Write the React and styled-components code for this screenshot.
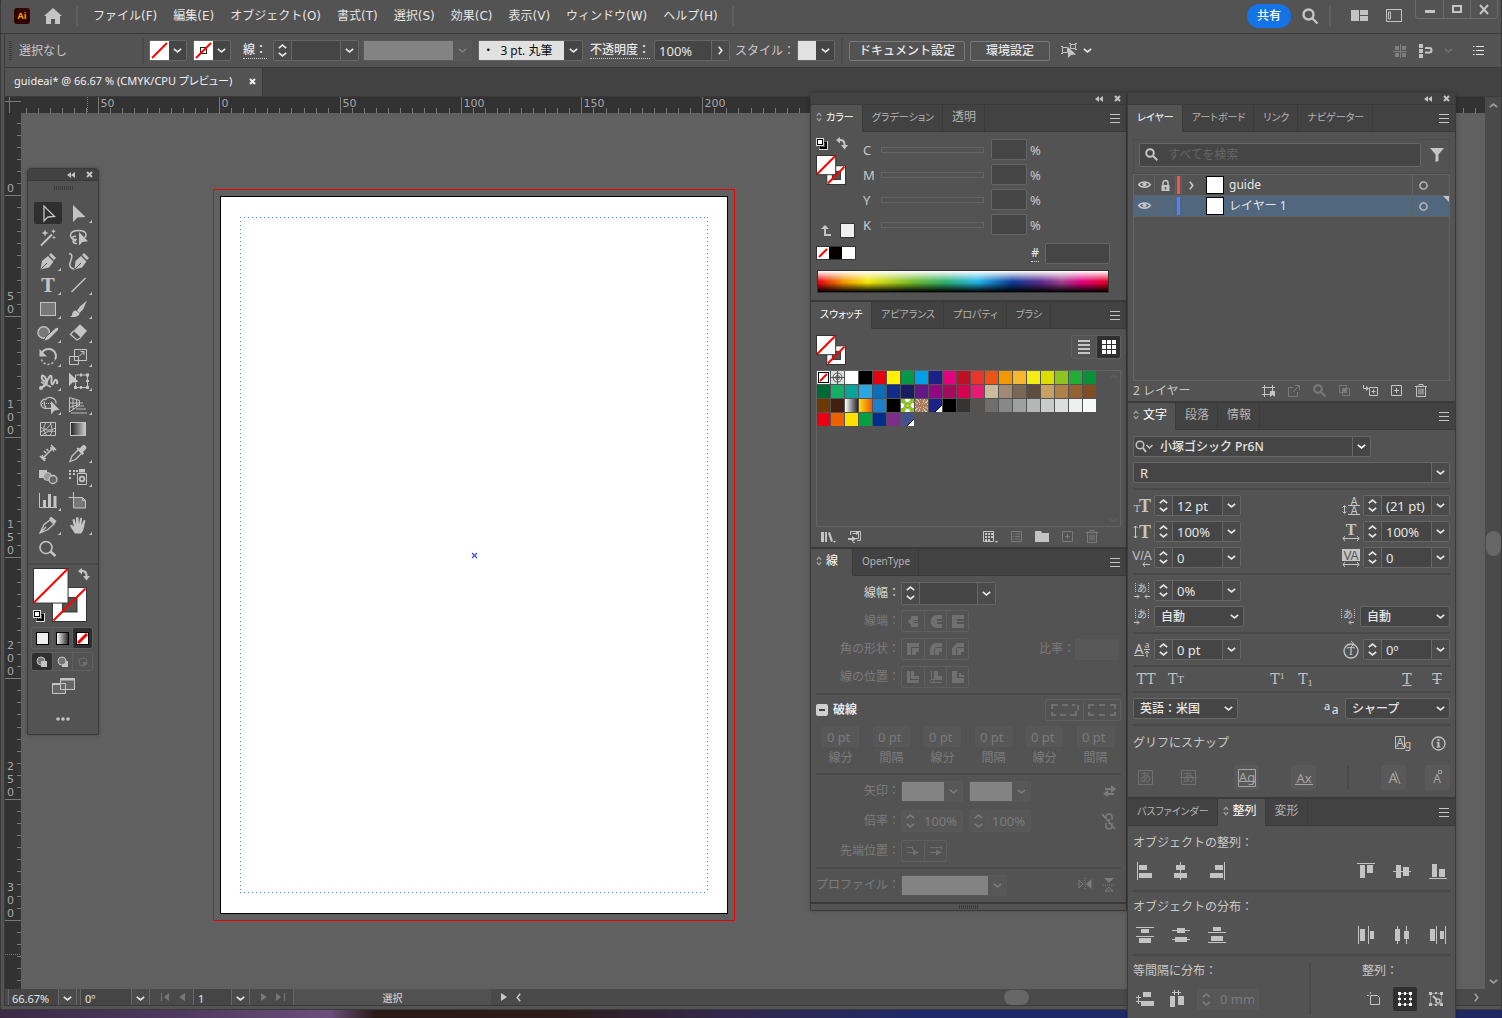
import React from "react";
import styled, { createGlobalStyle, css } from "styled-components";

const color = {
  panel: "#535353",
  dark: "#424242",
  line: "#3a3a3a",
  rule: "#494949",
  edge: "#666666",
  field: "#454545",
  text: "#e6e6e6",
  label: "#c8c8c8",
  icon: "#c4c4c4",
  dim: "#7b7b7b",
};

const GlobalStyle = createGlobalStyle`
  * { box-sizing: border-box; }
  body {
    margin: 0;
    background: #3a2a45;
    color: ${color.text};
    font: 12px/16px "Noto Sans", "Noto Sans CJK JP", sans-serif;
  }
  button, input, select {
    margin: 0;
    padding: 0;
    border: 0;
    background: none;
    color: inherit;
    font: inherit;
    border-radius: 0;
    appearance: none;
  }
  button { display: flex; align-items: center; justify-content: center; }
  svg { display: block; flex: none; }
  ul { list-style: none; margin: 0; padding: 0; }
`;

/* ---------- icons ---------- */

const Svg = styled.svg`
  overflow: visible;
  fill: none;
  stroke: currentColor;
  stroke-width: ${(p) => p.$sw || 1};
  .f { fill: currentColor; stroke: none; }
  .g { fill: #777777; }
  .d { stroke-dasharray: 1 1; }
  text { fill: currentColor; stroke: none; }
  text.k { fill: ${color.panel}; }
`;

function Icon({ w = 16, h = 16, sw, children }) {
  return (
    <Svg width={w} height={h} viewBox={`0 0 ${w} ${h}`} $sw={sw} aria-hidden="true">
      {children}
    </Svg>
  );
}

const serif = '"DejaVu Serif", serif';
const boldSerif = '"Liberation Serif", serif';
const sans = '"Noto Sans", sans-serif';
const arial = '"Liberation Sans", sans-serif';
const jp = '"Noto Sans CJK JP", sans-serif';

const Chevron = () => <Icon w={9} h={5} sw={1.7}><path d="M.8.8l3.700 3 3.700-3" /></Icon>;
const ChevronUp = () => <Icon w={9} h={5} sw={1.7}><path d="M.8 4.200l3.700-3 3.700 3" /></Icon>;
const ChevronRight = () => <Icon w={5} h={9} sw={1.7}><path d="M.8.8l3 3.700-3 3.700" /></Icon>;
const ChevronLeft = () => <Icon w={5} h={9} sw={1.5}><path d="M4.200.8l-3 3.700 3 3.700" /></Icon>;
const Close = () => <Icon w={7} h={7} sw={2}><path d="M1 1l5 5M6 1L1 6" /></Icon>;
const Collapse = () => <Icon w={8} h={6}><path className="f" d="M4 0v6L0 3zM8 0v6L4 3z" /></Icon>;
const MenuLines = () => <Icon w={10} h={9}><path d="M0 .5h10M0 4.5h10M0 8.5h10" /></Icon>;
const Updown = () => <Icon w={6} h={10} sw={1.3}><path d="M.8 3.8L3 1.2l2.2 2.6M.8 6.2L3 8.8l2.2-2.6" /></Icon>;
const Grip = () => <Icon w={19} h={4}><path stroke="#3a3a3a" d="M.5 0v4M2.5 0v4M4.5 0v4M6.5 0v4M8.5 0v4M10.5 0v4M12.5 0v4M14.5 0v4M16.5 0v4M18.5 0v4" /></Icon>;
const Magnifier = () => <Icon w={13} h={13} sw={2}><circle cx="5" cy="5" r="3.8" /><path d="M8 8l4.3 4.3" /></Icon>;
const Swap = () => <Icon w={12} h={13}><path className="f" d="M4 0v2c4 0 5.500 2 5.500 6H12l-3.500 4.500L5 8h2.500c0-2.500-1-4-3.500-4v2.500L0 3z" /></Icon>;

const Defaults = () => (
  <Icon w={12} h={12}>
    <rect x="4.500" y="4.500" width="6" height="6" stroke="#ddd" strokeWidth="3" />
    <rect x="4.500" y="4.500" width="5.500" height="5.500" stroke="#000" strokeWidth="2" />
    <rect x=".5" y=".5" width="7" height="7" stroke="#ddd" />
    <rect x="1.500" y="1.500" width="5" height="5" fill="#fff" stroke="#000" />
  </Icon>
);

const Bin = () => <Icon w={12} h={13}><path d="M0 2.500h12M4 2.500v-2h4v2M1.500 3v9.500h9V3M4 4.500v6M6 4.500v6M8 4.500v6" /></Icon>;
const PlusBox = () => <Icon w={11} h={11}><path d="M.5.5h10v10H.5zM5.500 3v5M3 5.500h5" /></Icon>;

/* fill swatch over stroke swatch, both set to "none" */
function FillStroke({ size }) {
  const s = size * 0.64;
  const o = size - s;
  const t = s * 0.29;
  return (
    <Icon w={size} h={size}>
      <rect x={o} y={o} width={s - 0.5} height={s - 0.5} fill="#fff" stroke="#333" />
      <rect x={o + t} y={o + t} width={s - 2 * t} height={s - 2 * t} fill={color.panel} stroke="#333" />
      <path d={`M${o + 1} ${size - 1.5}L${size - 1.5} ${o + 1}`} stroke="#f00" strokeWidth="2" />
      <rect x=".5" y=".5" width={s} height={s} fill="#fff" stroke="#333" />
      <path d={`M1 ${s}L${s} 1`} stroke="#f00" strokeWidth="2" />
    </Icon>
  );
}

const NoneSwatch = ({ size = 19, square }) => (
  <Icon w={size} h={size}>
    <rect width={size} height={size} fill="#fff" stroke="none" />
    {square && <rect x={size / 2 - 3} y={size / 2 - 3} width="6" height="6" stroke="#222" />}
    <path d={`M2 ${size - 2}L${size - 2} 2`} stroke="#f00" strokeWidth="2" />
  </Icon>
);

const Target = () => <Icon w={13} h={13}><rect width="13" height="13" fill="#ddd" stroke="none" /><g stroke="#555"><circle cx="6.500" cy="6.500" r="4.500" /><circle cx="6.500" cy="6.500" r="2" /><path d="M6.500 0v13M0 6.500h13" /></g></Icon>;

const tools = [
  ["選択", 0, <path key="a" strokeWidth="1.300" d="M10 4v15l4-4 6.500-.5z" />],
  ["ダイレクト選択", 1, <path key="a" className="f" d="M8 3v17l4.500-4.500 8-.5z" />],
  ["自動選択", 0, <g key="a"><path strokeWidth="2" d="M7 19.500L18 8.500" /><path className="f" d="M11 3.500l1 2.500 2.500 1-2.500 1-1 2.500-1-2.500-2.500-1 2.500-1zM19.500 3l.7 1.600 1.600.7-1.600.7-.7 1.700-.7-1.700-1.600-.7 1.600-.7zM20 9.500l.6 1.400 1.400.6-1.400.6L20 13.500l-.6-1.400-1.400-.6 1.400-.6z" /></g>],
  ["なげなわ", 0, <g key="a"><path strokeWidth="1.500" d="M12 13.500c-4 .5-7-1.500-6.500-4.500.5-3 4-4.500 8-4.500s7.500 1.500 7.500 4.500c0 1.300-.6 2-1.500 2.800M11 10.500a2.300 2.300 0 1 0 0 4M8 15c0 2 1.500 2.500 4 2.500" /><path className="f" d="M14 6v13.500l3.500-3.500 5.500-.8z" /></g>],
  ["ペン", 1, <g key="a"><path className="f" d="M6.500 19.500L8 11l6-5 5.500 5.500-4.500 6zM15 5l2-2 5 5-2 2z" /><path stroke="#535353" d="M7 19l6-6" /></g>],
  ["曲線", 0, <g key="a"><path className="f" d="M9.500 19.500L10.500 11l5.500-5 5.500 5.500-4.500 6zM17 5l2-2 5 5-2 2z" /><path stroke="#535353" d="M10 19l6-6" /><path strokeWidth="1.500" d="M4 4c3-1 3.500 2 2 6s-2.500 8 3 9" /></g>],
  ["文字", 1, <text key="a" x="14" y="18" textAnchor="middle" fontSize="18" fontWeight="bold" fontFamily={serif}>T</text>],
  ["直線", 1, <path key="a" strokeWidth="1.500" d="M6.500 18l14-14" />],
  ["長方形", 1, <rect key="a" className="g" x="6.500" y="4.500" width="15" height="13" />],
  ["ブラシ", 1, <path key="a" className="f" d="M22 2.500l-4 9-3.500 3.500-2.500-2.500 3-4zM11 12.500l3.500 3c-.5 3-5 4-9.500 3.500 2-1 2-2 2.500-4s2-2.800 3.500-2.500z" />],
  ["Shaper", 1, <g key="a"><circle className="g" strokeWidth="1.400" cx="9.700" cy="10.500" r="5.800" /><path d="M9.500 19.500l2.500-5L22 5.500c1.500-1 3.500 1 2.500 2.500L15 17.500z" fill="currentColor" stroke="#535353" /></g>],
  ["消しゴム", 1, <g key="a"><path className="f" d="M15 2.300l7 6.500-6 7-7.500-7z" /><path strokeWidth="1.300" d="M8.500 9l-3 3.500 6.500 5.500 4-2.500" /></g>],
  ["回転", 1, <g key="a"><path strokeWidth="2" d="M8 6.500a7.500 7 0 0 1 13 7" /><path className="f" d="M5.500 3v7.500H13z" /><path strokeWidth="1.500" strokeDasharray="2 2" d="M7.500 13.500a7 7 0 0 0 13 1" /></g>],
  ["拡大・縮小", 1, <g key="a"><path d="M9.500 3.500h12v11h-12zM4.500 10.500h9v8h-9zM14 10.500l4.500-4.500M15.500 5.500h3.500v3.500" /></g>],
  ["線幅", 1, <g key="a"><path strokeWidth="2" d="M6 18c3-1 7-3 7-6S9 4 8 6s1 6 4 5 3-6 5-5-1 7 1 8 2-5 4-4 1 3 1 4" /><path strokeWidth="1.500" d="M7 12l10 5M9 16l5-6" /><circle className="f" cx="7" cy="18" r="2" /></g>],
  ["自由変形", 1, <g key="a"><path d="M10.500 5v12.500h12V5z" /><path className="f" d="M4 2.500V16l3.500-3.500 6-.8zM9 16h3v3H9zM21 16h3v3h-3zM21 3.500h3v3h-3zM15 16h2v3h-2zM21 10h3v2h-3zM15 3.500h2v3h-2z" /></g>],
  ["シェイプ形成", 1, <g key="a"><path strokeWidth="1.300" d="M12 5.200a4.600 4.600 0 1 0-1 9.200h6M11 6a6 5.500 0 0 1 11 3.500M12 13.500a6 6 0 0 1-1.500-6" /><path className="d" d="M8 9.500h9" /><path className="f" d="M17 7v13.500l3.500-4 5-.8z" /></g>],
  ["遠近グリッド", 1, <g key="a"><path d="M4.500 3.500v14.500l10-7V6.500zM4.500 9h10M4.500 13.500l9-3M8 4.500v11M11.500 5.500v7.500" /><path strokeWidth="1.500" opacity=".6" d="M13 12h6M11 15h10M6 19h16M14 9h4" /></g>],
  ["メッシュ", 0, <path key="a" d="M6.500 4.500h15v13h-15zM6.500 9c5 4 10 4 15 1M12 4.500c-3 4-3 9 1 13M16 4.500c2 3 3 9 0 13M6.500 14c5-2 9-5 11-9.500M8 17.500c4-4 8-5 13.500-4" />],
  ["グラデーション", 0, <rect key="a" x="5.500" y="4.500" width="15" height="13" fill="url(#toolGradient)" />],
  ["ものさし", 0, <g key="a"><path strokeWidth="1.500" d="M9 16l10-10M6 14l5 5M17 3l5 5M8.500 13v3.500H12M16 6h3.500v3.500" /><path strokeWidth="1.500" d="M10 9l2 2M12.500 7l2 2" /></g>],
  ["スポイト", 1, <g key="a"><path strokeWidth="1.300" d="M5 19.500l2-5.500 6.500-6.500 3.500 3.500-6.500 6.500z" /><path className="f" d="M11.500 6.500l1.500-1 1.500 1 3-3c2-1.500 5 1.500 3.500 3.500l-3 3 1 1.500-1.500 1.500z" /></g>],
  ["ブレンド", 0, <g key="a"><path className="f" d="M5 4h8v8H5z" /><circle cx="13.500" cy="10.500" r="4" fill="#999" /><circle cx="19" cy="13.500" r="4" fill="#666" strokeWidth="1.300" /></g>],
  ["シンボルスプレー", 1, <g key="a"><path d="M12.500 7.500h9v11h-9z" /><path className="f" d="M14 3h6v3.500h-6zM4 4h2v2H4zM8 4h2v2H8zM11 4h2v2h-2zM4 7h2v2H4zM8 7h2v2H8zM4 11h2v2H4z" /><circle cx="17" cy="13" r="2.300" strokeWidth="1.800" /></g>],
  ["棒グラフ", 1, <g key="a"><path d="M5.500 3v14.500H23" /><path className="f" d="M9 10h3v7H9zM14 4h3v13h-3zM19.500 6h3v11h-3z" /></g>],
  ["アートボード", 0, <g key="a"><path className="g" d="M8.500 7.500h9l3 3v7.500h-12z" /><path d="M8.500 2v8M3.500 7.500h8M17.500 7.500v3h3" /></g>],
  ["スライス", 1, <g key="a"><path strokeWidth="1.300" d="M6 19l4-8.500 6-4.500 4 4L14 15.500zM6 19l6-6" /><path className="f" d="M15 5l2-2.500 5.500 4.500-2 3z" /></g>],
  ["手のひら", 1, <path key="a" className="f" d="M10 19.500C8 16 6 14 5 11.500c1-1.500 2.500-.5 4 1.500L7.500 6c1-1.500 2-1 2.500.5l1 4V4c.8-1.500 2-1.200 2.500 0l.5 6 1-5.500c1-1.200 2-.8 2 .5L16.500 11l2-4.500c1-1 2.200-.3 1.700 1-1.200 5-1.200 9-4.200 12z" />],
  ["ズーム", 0, <g key="a"><circle cx="12" cy="9.500" r="6" strokeWidth="1.600" /><path strokeWidth="2.500" d="M16.500 13.500l5 4.500" /></g>],
];

/* ---------- shared controls ---------- */

const box = css`
  border: 1px solid ${(p) => (p.$dim ? "#595959" : color.edge)};
  border-radius: 2px;
  background: ${(p) => (p.$dim ? "#575757" : color.field)};
  color: ${(p) => (p.$dim ? color.dim : color.text)};
`;

const Field = styled.div`
  ${box}
  display: flex;
  width: ${(p) => (p.$w ? `${p.$w}px` : "auto")};
  height: ${(p) => p.$h || 21}px;
  input {
    flex: 1;
    min-width: 0;
    padding: 0 ${(p) => p.$pad || 4}px;
    font-size: 13px;
  }
  > button {
    width: 18px;
    border-left: 1px solid ${(p) => (p.$dim ? "#595959" : color.edge)};
    background: #4b4b4b;
  }
`;

const Steps = styled.div`
  display: flex;
  flex-direction: column;
  justify-content: space-evenly;
  width: 18px;
  border-right: 1px solid ${(p) => (p.$dim ? "#595959" : color.edge)};
  background: ${(p) => (p.$dim ? "none" : "#4b4b4b")};
`;

function Spinner({ label, value = "", w = 87, h, dim, drop = true }) {
  return (
    <Field $w={w} $h={h} $dim={dim}>
      <Steps $dim={dim}>
        <button aria-label={`${label} 増やす`}><ChevronUp /></button>
        <button aria-label={`${label} 減らす`}><Chevron /></button>
      </Steps>
      <input aria-label={label} defaultValue={value} disabled={dim} />
      {drop && <button aria-label={`${label} 一覧`}><Chevron /></button>}
    </Field>
  );
}

const SelectBox = styled.div`
  ${box}
  display: grid;
  align-items: center;
  width: ${(p) => p.$w}px;
  height: 21px;
  > * { grid-area: 1 / 1; }
  select { width: 100%; height: 100%; padding-left: 6px; font-weight: 500; }
  svg { justify-self: end; margin-right: 4px; pointer-events: none; }
`;

function Select({ label, value, w }) {
  return (
    <SelectBox $w={w}>
      <select aria-label={label} defaultValue={value}><option>{value}</option></select>
      <Chevron />
    </SelectBox>
  );
}

const TextBox = styled.input`
  ${box}
  width: ${(p) => p.$w}px;
  height: 21px;
  padding: 0 4px;
  font-size: 13px;
`;

const IconButton = styled.button`
  width: ${(p) => p.$w || 24}px;
  height: ${(p) => p.$h || 22}px;
  color: ${(p) => (p.$dim ? "#707070" : color.icon)};
  background: ${(p) => (p.$on ? "#2f2f2f" : p.$tile ? "#595959" : "none")};
  border-radius: 2px;
`;

const Row = styled.div`
  display: flex;
  align-items: center;
  gap: ${(p) => p.$gap || 0}px;
  justify-content: ${(p) => p.$justify || "flex-start"};
  height: ${(p) => (p.$h ? `${p.$h}px` : "auto")};
  margin-top: ${(p) => p.$mt || 0}px;
`;

const Rule = styled.hr`
  width: 100%;
  height: 2px;
  margin: ${(p) => p.$mt ?? 5}px 0 0;
  border: 0;
  background: ${color.rule};
`;

/* ---------- menu bar ---------- */

const MenuBar = styled.header`
  display: flex;
  align-items: center;
  height: 34px;
  padding: 0 0 2px 13px;
  border-bottom: 1px solid ${color.line};
  background: ${color.panel};
`;

const Logo = styled.div`
  width: 16px;
  height: 16px;
  border-radius: 3px;
  background: #330000;
  color: #ff9a00;
  font: bold 9px/16px "Noto Sans", sans-serif;
  text-align: center;
`;

const MenuNav = styled.nav`
  display: flex;
  gap: 16px;
  padding-left: 15px;
  font-family: "DejaVu Sans", "Noto Sans CJK JP", sans-serif;
  white-space: nowrap;
`;

const Divider = styled.div`
  width: 2px;
  height: ${(p) => p.$h || 20}px;
  background: ${(p) => p.$c || "#606060"};
`;

const Push = styled.div`
  flex: ${(p) => p.$grow || 1};
`;

const Share = styled.button`
  width: 44px;
  height: 24px;
  border-radius: 12px;
  background: #1473e6;
  color: #ffffff;
  font-weight: 500;
`;

const MenuTools = styled.div`
  display: flex;
  align-items: center;
  gap: 11px;
  padding-right: 13px;
  color: ${color.icon};
  > :last-child { margin-left: 9px; }
`;

const WindowButtons = styled.div`
  display: flex;
  align-self: flex-start;
  height: 19px;
  margin-right: 3px;
  border: 1px solid #6c6c6c;
  border-top: 0;
  border-radius: 0 0 4px 4px;
  button { width: 27px; color: ${color.icon}; }
  button + button { border-left: 1px solid #6c6c6c; }
`;

const menus = ["ファイル(F)", "編集(E)", "オブジェクト(O)", "書式(T)", "選択(S)", "効果(C)", "表示(V)", "ウィンドウ(W)", "ヘルプ(H)"];

function AppMenu() {
  return (
    <MenuBar>
      <Logo>Ai</Logo>
      <IconButton $w={46} aria-label="ホーム">
        <Icon w={18} h={16}><path className="f" d="M9 0l9 8h-2v8h-5v-5H7v5H2V8H0z" /></Icon>
      </IconButton>
      <Divider />
      <MenuNav>{menus.map((m) => <button key={m}>{m}</button>)}</MenuNav>
      <Row $gap={14}><span /><Divider /></Row>
      <Push />
      <MenuTools>
        <Share>共有</Share>
        <Icon w={16} h={16} sw={2.4}><circle cx="6.500" cy="6.500" r="5" /><path d="M10 10l5.500 5.500" /></Icon>
        <Divider />
        <Row $gap={18}>
          <Icon w={17} h={11}><path className="f" d="M0 0h8v11H0zM9 0h8v5H9zM9 6h8v5H9z" /></Icon>
          <Icon w={16} h={13}><path d="M.5.5h15v12H.5zM2.500 3h2v7h-2z" /></Icon>
        </Row>
      </MenuTools>
      <WindowButtons>
        <button aria-label="最小化"><Icon w={10} h={10}><path className="f" d="M0 6h10v3H0z" /></Icon></button>
        <button aria-label="最大化"><Icon w={10} h={8} sw={2}><path d="M1 1h8v6H1z" /></Icon></button>
        <button aria-label="閉じる"><Icon w={10} h={9} sw={2}><path d="M1 0l8 9M9 0L1 9" /></Icon></button>
      </WindowButtons>
    </MenuBar>
  );
}

/* ---------- control bar ---------- */

const ControlBar = styled.div`
  display: flex;
  align-items: center;
  height: 34px;
  padding: 0 17px 0 4px;
  border-bottom: 1px solid ${color.line};
  background: ${color.panel};
  white-space: nowrap;
`;

const SideGrip = styled.div`
  width: 3px;
  height: 20px;
  background: repeating-linear-gradient(#3a3a3a 0 1px, transparent 1px 2px);
`;

const Status = styled.span`
  width: 130px;
  padding-left: 7px;
  color: ${color.label};
`;

const Swatch = styled.div`
  ${box}
  display: flex;
  width: ${(p) => p.$w || 38}px;
  height: 21px;
  margin-right: 6px;
  > button { width: 18px; }
`;

const Preview = styled.div`
  flex: 1;
  background: ${(p) => p.$bg || "#e1e1e1"};
  color: #111111;
  line-height: 19px;
`;

const Dotted = styled.span`
  margin: ${(p) => p.$m || "0 6px"};
  border-bottom: 1px dotted #d0d0d0;
  color: ${color.text};
  font-weight: 500;
`;

const PlainButton = styled.button`
  height: 20px;
  margin-right: 5px;
  padding: 0 ${(p) => p.$pad || 9}px;
  border: 1px solid #7a7a7a;
  border-radius: 2px;
  font-weight: 500;
`;

const StyleLabel = styled.span`
  padding: 0 2px 0 5px;
  color: ${color.label};
`;

function Controls() {
  return (
    <ControlBar>
      <SideGrip />
      <Status>選択なし</Status>
      <Row $gap={5}><Divider $c="#4a4a4a" $h={26} />
        <Swatch><NoneSwatch /><button aria-label="塗り"><Chevron /></button></Swatch>
      </Row>
      <Swatch><NoneSwatch square /><button aria-label="線"><Chevron /></button></Swatch>
      <Dotted>線：</Dotted>
      <Spinner label="線" w={86} />
      <Row $gap={4}><span /><Swatch $dim $w={109}><Preview $bg="#838383" /><button aria-label="プロファイル"><Chevron /></button></Swatch></Row>
      <Swatch $w={105}><Preview>&nbsp;・&nbsp; 3 pt. 丸筆</Preview><button aria-label="ブラシ"><Chevron /></button></Swatch>
      <Dotted $m="0 4px 0 1px">不透明度：</Dotted>
      <Field $w={76}><input aria-label="不透明度" defaultValue="100%" /><button aria-label="不透明度パネル"><ChevronRight /></button></Field>
      <StyleLabel>スタイル：</StyleLabel>
      <Swatch><Preview /><button aria-label="スタイル"><Chevron /></button></Swatch>
      <Row $gap={6}><Divider $c="#4a4a4a" $h={26} /><PlainButton>ドキュメント設定</PlainButton></Row>
      <PlainButton $pad={15}>環境設定</PlainButton>
      <IconButton $w={28} aria-label="類似オブジェクト">
        <Icon w={17} h={17}><path d="M1.500 5.500h5v5h-5zM9.500 2.500h5v4h-5zM0 4.500h2M0 11.500h2M8 1.500h2M14 1.500h2M14 7.500h2" /><path className="f" d="M7 5v11l3-3 5-.5z" /></Icon>
      </IconButton>
      <Chevron />
      <Push />
      <Row $gap={10}>
        <Icon w={14} h={14}><g opacity=".3"><path className="f" d="M2 2h4v4H2zM9 2h4v4H9zM2 9h4v4H2zM9 9h4v4H9z" /><path d="M7.500 0v14M0 7.500h14" /></g></Icon>
        <IconButton $w={16} aria-label="ピクセルに整合"><Icon w={16} h={14}><path className="f" d="M2 0h4v4H2zM2 5h4v4H2zM2 10h4v4H2z" /><path strokeWidth="2" d="M8 4h4.500q2 0 2 2.200T12.500 8.500H8" /></Icon></IconButton>
        <IconButton $w={10} $dim aria-label="整列先"><Chevron /></IconButton>
        <span />
        <Icon w={11} h={9}><path d="M3 .5h8M3 4.500h8M3 8.500h8M0 .5h1.500M0 4.500h1.500M0 8.500h1.500" /></Icon>
      </Row>
    </ControlBar>
  );
}

/* ---------- document area ---------- */

const DocTabs = styled.div`
  display: flex;
  height: 29px;
  border-bottom: 1px solid ${color.line};
  background: ${color.dark};
`;

const DocTab = styled.div`
  display: flex;
  align-items: center;
  justify-content: space-between;
  width: 258px;
  padding: 0 6px 2px 9px;
  border-right: 1px solid ${color.line};
  background: ${color.panel};
  color: #f0f0f0;
  font-size: 11px;
  font-feature-settings: "palt";
  white-space: nowrap;
`;

const Workspace = styled.main`
  flex: 1;
  display: grid;
  grid-template-columns: 16px 1fr 16px;
  grid-template-rows: 16px 1fr;
  min-height: 890px;
`;

const RulerSvg = styled.svg`
  width: 100%;
  height: 100%;
  background: #323232;
  fill: none;
  stroke: #7a7a7a;
  text {
    fill: #a8a8a8;
    stroke: none;
    font: 11px "DejaVu Sans", sans-serif;
  }
`;

const STEP = 12.08;
const ticks = (n) => Array.from({ length: n }, (_, i) => i);

function HorizontalRuler() {
  return (
    <RulerSvg aria-hidden="true">
      {ticks(122).map((i) => {
        const x = Math.round(198 + (i - 16) * STEP) + 0.5;
        const major = (i - 16) % 10 === 0;
        return (
          <g key={i}>
            <path d={`M${x} ${major ? 0 : 11}V16`} />
            {major && <text x={x + 2} y="10">{Math.abs((i - 16) * 5)}</text>}
          </g>
        );
      })}
      <path strokeDasharray="1 1" d="M66.500 0V16" />
    </RulerSvg>
  );
}

function VerticalRuler() {
  return (
    <RulerSvg aria-hidden="true">
      {ticks(73).map((i) => {
        const y = Math.round(82 + (i - 6) * STEP) + 0.5;
        const major = (i - 6) % 10 === 0;
        const digits = String((i - 6) * 5).split("");
        return (
          <g key={i}>
            <path d={`M${major ? 0 : 12} ${y}H16`} />
            {major && digits.map((d, k) => (
              <text key={k} x="2" y={y - 4 - (digits.length - 1 - k) * 13}>{d}</text>
            ))}
          </g>
        );
      })}
      <path strokeDasharray="1 1" d="M0 841.500H16" />
    </RulerSvg>
  );
}

const Canvas = styled.div`
  position: relative;
  overflow: hidden;
  background: #606060;
`;

const Bleed = styled.div`
  position: absolute;
  left: 192px;
  top: 76px;
  padding: 6px;
  border: 1px solid #f00000;
`;

const Artboard = styled.div`
  width: 508px;
  height: 718px;
  padding: 20px 19px;
  border: 1px solid #000000;
  background: #ffffff;
`;

const dots = "#4a80f0 0 1px, transparent 1px 4px";

const Guide = styled.div`
  display: grid;
  place-items: center;
  width: 100%;
  height: 100%;
  color: #3050d0;
  background:
    repeating-linear-gradient(90deg, ${dots}) top / 100% 1px no-repeat,
    repeating-linear-gradient(90deg, ${dots}) bottom / 100% 1px no-repeat,
    repeating-linear-gradient(${dots}) left / 1px 100% no-repeat,
    repeating-linear-gradient(${dots}) right / 1px 100% no-repeat;
`;

const VScroll = styled.div`
  grid-row: 1 / 3;
  grid-column: 3;
  display: flex;
  flex-direction: column;
  align-items: center;
  justify-content: space-between;
  padding: 6px 0 5px;
  background: #4a4a4a;
  color: #a0a0a0;
`;

const Thumb = styled.div`
  width: ${(p) => p.$w}px;
  height: ${(p) => p.$h}px;
  border-radius: 8px;
  background: #676767;
`;

const StatusBar = styled.footer`
  display: flex;
  align-items: center;
  height: 17px;
  padding: 0 22px 0 3px;
  border-bottom: 1px solid ${color.line};
  background: #4a4a4a;
  color: #a0a0a0;
`;

const StatusField = styled(Field)`
  height: 16px;
  border-top: 0;
  border-bottom: 0;
  border-radius: 0;
  margin-right: 3px;
  input { padding-top: 4px; font-size: 11px; line-height: 12px; }
  > button { padding-top: 3px; }
`;

const StatusName = styled.div`
  width: 198px;
  height: 16px;
  padding-top: 3px;
  border-left: 1px solid ${color.edge};
  background: #515151;
  color: ${color.label};
  text-align: center;
  font-size: 10px;
  line-height: 13px;
  font-weight: 500;
`;

const NavIcons = styled.div`
  display: flex;
  justify-content: space-evenly;
  width: 40px;
  color: ${(p) => (p.$lit ? "#c8c8c8" : "#777777")};
`;

const First = () => <Icon w={9} h={8}><path className="f" d="M0 0h1v8H0zM8 0v8L3 4z" /></Icon>;
const Prev = () => <Icon w={6} h={8}><path className="f" d="M6 0v8L0 4z" /></Icon>;
const Next = () => <Icon w={6} h={8}><path className="f" d="M0 0v8l6-4z" /></Icon>;
const Last = () => <Icon w={9} h={8}><path className="f" d="M8 0h1v8H8zM0 0v8l5-4z" /></Icon>;

function StatusLine() {
  return (
    <StatusBar>
      <StatusField $w={69} $pad={3}><input aria-label="ズーム" defaultValue="66.67%" /><button aria-label="ズーム一覧"><Chevron /></button></StatusField>
      <StatusField $w={70}><input aria-label="回転" defaultValue="0º" /><button aria-label="回転一覧"><Chevron /></button></StatusField>
      <NavIcons><First /><Prev /></NavIcons>
      <StatusField $w={57}><input aria-label="アートボード" defaultValue="1" /><button aria-label="アートボード一覧"><Chevron /></button></StatusField>
      <NavIcons><Next /><Last /></NavIcons>
      <StatusName>選択</StatusName>
      <NavIcons $lit><Next /><ChevronLeft /></NavIcons>
      <Push $grow={51} />
      <Thumb $w={25} $h={15} />
      <Push $grow={48} />
      <ChevronRight />
    </StatusBar>
  );
}

/* ---------- floating panels ---------- */

const FloatTitle = styled.div`
  display: flex;
  align-items: center;
  justify-content: flex-end;
  gap: 11px;
  height: 12px;
  padding-right: 5px;
  border-bottom: 1px solid ${color.line};
  background: ${color.dark};
  color: ${color.icon};
`;

const Float = styled.section`
  width: ${(p) => p.$w}px;
  border: 1px solid ${color.line};
  border-radius: 4px 4px 0 0;
  background: ${color.panel};
  box-shadow: 0 0 4px rgba(0, 0, 0, 0.25);
`;

const Docks = styled.div`
  position: absolute;
  top: 92px;
  right: 46px;
  display: flex;
  align-items: flex-start;
`;

const TabRow = styled.div`
  display: flex;
  height: ${(p) => (p.$first ? 27 : 29)}px;
  border-top: ${(p) => (p.$first ? 0 : `2px solid ${color.line}`)};
  background: ${color.dark};
`;

const Tab = styled.button`
  justify-content: flex-start;
  gap: 4px;
  min-width: 42px;
  padding: ${(p) => (p.$marked ? "0 8px 2px 5px" : "0 8px 2px 9px")};
  border-right: 1px solid ${color.line};
  border-bottom: 1px solid ${(p) => (p.$on ? color.panel : color.line)};
  background: ${(p) => (p.$on ? color.panel : color.dark)};
  color: ${(p) => (p.$on ? "#ffffff" : "#b4b4b4")};
  font-size: ${(p) => (p.$small ? 10 : 12)}px;
  font-feature-settings: "palt";
  white-space: nowrap;
  svg { color: #a0a0a0; }
`;

const TabEnd = styled.div`
  flex: 1;
  display: flex;
  align-items: center;
  justify-content: flex-end;
  padding-right: 6px;
  border-bottom: 1px solid ${color.line};
  color: ${color.icon};
`;

const isNarrow = (t) => /[ァ-ヶA-Z]/.test(t);

function Tabs({ items, active, marked, first }) {
  return (
    <TabRow $first={first}>
      {items.map((t) => (
        <Tab key={t} $on={t === active} $marked={t === active && marked} $small={isNarrow(t)}>
          {t === active && marked && <Updown />}
          {t}
        </Tab>
      ))}
      <TabEnd><MenuLines /></TabEnd>
    </TabRow>
  );
}

const Body = styled.div`
  padding: ${(p) => p.$p || "6px 5px"};
`;

/* ---------- tools ---------- */

const ToolsFloat = styled(Float)`
  position: absolute;
  left: 27px;
  top: 168px;
  width: 72px;
`;

const ToolGrid = styled.div`
  display: grid;
  grid-template-columns: 28px 28px;
  gap: 2px 3px;
  padding: 12px 0 3px 6px;
`;

const ToolsBody = styled.div`
  display: flex;
  flex-direction: column;
  padding: 5px 0 0;
  > svg { align-self: center; }
`;

const FillStrokeGrid = styled.div`
  display: grid;
  grid-template-columns: 54px;
  margin: 3px 5px 5px;
  > * { grid-area: 1 / 1; }
  > svg:nth-child(2) { justify-self: end; margin-right: -3px; color: ${color.icon}; }
  > svg:nth-child(3) { align-self: end; }
`;

const ButtonStrip = styled.div`
  display: flex;
  width: max-content;
  margin: ${(p) => p.$m || 0};
  border: 1px solid #5f5f5f;
  border-radius: 2px;
  button + button { border-left: 1px solid #5f5f5f; }
`;

function Tools() {
  return (
    <ToolsFloat>
      <FloatTitle><Collapse /><Close /></FloatTitle>
      <ToolsBody>
        <Grip />
        <ToolGrid>
          {tools.map(([name, more, art], i) => (
            <IconButton key={name} $w={28} $on={i === 0} aria-label={name}>
              <Icon w={28} h={22}>
                {i === 19 && (
                  <defs>
                    <linearGradient id="toolGradient">
                      <stop stopColor="#222" /><stop offset="1" stopColor="#ccc" />
                    </linearGradient>
                  </defs>
                )}
                {art}
                {!!more && <path className="f" d="M27 18v3h-3z" />}
              </Icon>
            </IconButton>
          ))}
        </ToolGrid>
        <Rule $mt={0} />
        <FillStrokeGrid><FillStroke size={54} /><Swap /><Defaults /></FillStrokeGrid>
        <ButtonStrip $m="0 3px 3px">
          <IconButton $w={20} $h={20} aria-label="カラー"><Icon w={13} h={13}><rect x=".5" y=".5" width="12" height="12" fill="#eee" stroke="#000" /></Icon></IconButton>
          <IconButton $w={20} $h={20} aria-label="グラデーション"><Icon w={13} h={13}><defs><linearGradient id="mini"><stop stopColor="#fff" /><stop offset="1" stopColor="#222" /></linearGradient></defs><rect x=".5" y=".5" width="12" height="12" fill="url(#mini)" stroke="#000" /></Icon></IconButton>
          <IconButton $w={20} $h={20} $on aria-label="なし"><Icon w={13} h={13}><rect x=".5" y=".5" width="12" height="12" fill="#fff" stroke="#000" /><path d="M2 11l9-9" stroke="#f00" strokeWidth="3" /></Icon></IconButton>
        </ButtonStrip>
        <ButtonStrip $m="0 3px 7px">
          <IconButton $w={20} $h={17} $on aria-label="標準描画"><Icon w={12} h={12}><circle className="g" cx="5" cy="5" r="4" /><path className="f" d="M5 5h6v6H5z" /></Icon></IconButton>
          <IconButton $w={20} $h={17} aria-label="背面描画"><Icon w={12} h={12}><path className="f" d="M5 5h6v6H5z" /><circle className="g" cx="5" cy="5" r="4" /></Icon></IconButton>
          <IconButton $w={20} $h={17} $dim aria-label="内側描画"><Icon w={12} h={12}><circle cx="6" cy="6" r="4" /><path className="f" d="M6 6h3v3H6z" /></Icon></IconButton>
        </ButtonStrip>
        <Icon w={23} h={17}><g stroke="#c4c4c4"><path fill="#666" d="M.5 5.500h13v10H.5zM8.500.5h14v11h-14z" /><path strokeWidth="2" d="M.5 6h8M8.500 1.500h14" /></g></Icon>
        <Row $h={30} $justify="center" $mt={9}><Icon w={14} h={4}><g fill="#c4c4c4" stroke="none"><circle cx="2" cy="2" r="1.800" /><circle cx="7" cy="2" r="1.800" /><circle cx="12" cy="2" r="1.800" /></g></Icon></Row>
      </ToolsBody>
    </ToolsFloat>
  );
}

/* ---------- colour ---------- */

const ColorGrid = styled.div`
  display: grid;
  grid-template-columns: 47px 1fr;
  padding: 5px 16px 6px 5px;
`;

const ColorLeft = styled.div`
  display: flex;
  flex-direction: column;
  color: ${color.icon};
`;

const Channel = styled.label`
  display: flex;
  align-items: center;
  gap: 7px;
  height: 21px;
  margin-bottom: 4px;
  color: ${color.label};
  font-size: 13px;
  > span:first-child { width: 11px; }
  > span:last-child { margin-left: -4px; }
`;

const ChannelList = styled.div`
  padding-top: 2px;
`;

const Slider = styled.input`
  width: 103px;
  height: 6px;
  border: 1px solid #646464;
  &::-webkit-slider-thumb { appearance: none; width: 1px; height: 1px; }
`;

const ChipRow = styled.div`
  display: flex;
  width: 40px;
  height: 14px;
  margin-top: 8px;
  border: 1px solid #333333;
`;

const Chip = styled.div`
  width: ${(p) => p.$s || 13}px;
  height: ${(p) => p.$s || 12}px;
  background: ${(p) => p.$bg};
  border: ${(p) => (p.$s ? "1px solid #333333" : 0)};
`;

const Spectrum = styled.div`
  height: 23px;
  margin: 0 17px 7px 6px;
  border: 1px solid #333333;
  background:
    linear-gradient(#ffffff 0, rgba(255, 255, 255, 0) 50%, rgba(0, 0, 0, 0) 55%, #000000 100%),
    linear-gradient(90deg, #e60012, #f39800 9%, #f4e60a 17%, #6fba2c 33%, #2fb070 44%, #20b4e8 55%, #0c3c98 67%, #5f2a8c 77%, #a04090 84%, #e4007f 91%, #e60020);
`;

function ColorPanel() {
  return (
    <>
      <Tabs first items={["カラー", "グラデーション", "透明"]} active="カラー" marked />
      <ColorGrid>
        <ColorLeft>
          <Row $gap={8}><Defaults /><Swap /></Row>
          <Row $mt={5} $h={30}><FillStroke size={30} /></Row>
          <Row $mt={38} $gap={8} $h={15}>
            <Icon w={16} h={12}><path className="f" d="M9 0l4 4h-3v5h5v2H8V4H5z" /></Icon>
            <Chip $s={15} $bg="#eef0ef" />
          </Row>
          <ChipRow><NoneSwatch size={12} /><Chip $bg="#070000" /><Chip $bg="#ffffff" /></ChipRow>
        </ColorLeft>
        <div>
          <ChannelList>
            {["C", "M", "Y", "K"].map((c) => (
              <Channel key={c}>
                <span>{c}</span>
                <Slider type="range" defaultValue={0} aria-label={`${c} スライダー`} />
                <TextBox $w={36} aria-label={c} />
                <span>%</span>
              </Channel>
            ))}
          </ChannelList>
          <Row as="label" $justify="flex-end" $mt={8}>
            <Dotted>#</Dotted>
            <TextBox $w={65} />
          </Row>
        </div>
      </ColorGrid>
      <Spectrum />
    </>
  );
}

/* ---------- swatches ---------- */

const swatchRows = `
  none target #ffffff #000000 #e60012 #fff100 #009944 #00a0e9 #1d2088 #e4007f #be1022 #e7352b #ea5514 #f39800 #f8b62d #f5ee14 #dadf00 #8fc31f #22ac38 #079238
  #006934 #13ae67 #0aa29a #2ca6e0 #0c6eb9 #102b88 #171c61 #601986 #920783 #a40b5d #d7004f #e71a74 #c9bc9c #a28976 #796852 #604c3f #c9a063 #b08146 #956134 #7f4d21
  #6a3906 #402010 fade sun #1e7ec8 #000000 leaf stone #1d2088/ #000000 #363433 #555250 #6e6e6e #888889 #9fa0a0 #b5b6b6 #c9caca #dcdddd #eeefef #f7f8f8
  #e60012 #eb6100 #ffe100 #089e44 #002e8c #7f2d8d #44518f/
`.trim().split(/\s+/);

const patterns = {
  fade: "linear-gradient(90deg, #fff, #222)",
  sun: "linear-gradient(90deg, #ffe100, #ea5514)",
  leaf: "radial-gradient(circle, #e8c820 10%, #5cb531 25%, #a8d36b 38%, transparent 45%), conic-gradient(from 22deg, #8fc31f 0 12%, #fff 12% 25%, #8fc31f 25% 37%, #fff 37% 50%, #8fc31f 50% 62%, #fff 62% 75%, #8fc31f 75% 87%, #fff 87%)",
  stone: "repeating-conic-gradient(#a87c5c 0 20deg, #d8bfa8 20deg 30deg)",
};

const swatchBg = (s) =>
  s.endsWith("/")
    ? `linear-gradient(135deg, ${s.slice(0, -1)} 70%, #000 70% 75%, #fff 75%)`
    : patterns[s] || s;

const SwatchBox = styled.div`
  display: flex;
  justify-content: space-between;
  height: 157px;
  margin-top: 5px;
  border: 1px solid #646464;
`;

const SwatchGrid = styled.div`
  display: grid;
  grid-template-columns: repeat(20, 13px);
  grid-auto-rows: 13px;
  gap: 1px;
`;

const SwatchCell = styled.button`
  background: ${(p) => p.$bg};
`;

const ScrollEnds = styled.div`
  display: flex;
  flex-direction: column;
  justify-content: space-between;
  padding: 3px 2px;
  color: #5c5c5c;
`;

const Footer = styled.div`
  display: flex;
  align-items: center;
  gap: 13px;
  height: 19px;
  padding: 0 23px 0 ${(p) => p.$pl || 0}px;
  color: ${color.icon};
`;

const Faded = styled.span`
  opacity: 0.35;
`;

function SwatchPanel() {
  return (
    <>
      <Tabs items={["スウォッチ", "アピアランス", "プロパティ", "ブラシ"]} active="スウォッチ" />
      <Body $p="5px 5px 1px">
        <Row $justify="space-between">
          <Row $mt={1}><FillStroke size={30} /></Row>
          <ButtonStrip $m="0 0 6px">
            <IconButton $w={24} aria-label="リスト表示"><Icon w={12} h={14} sw={2}><path d="M0 1h12M0 5h12M0 9h12M0 13h12" /></Icon></IconButton>
            <IconButton $w={24} $on aria-label="サムネール表示"><Icon w={14} h={14}><path fill="#fff" stroke="none" d="M0 0h4v4H0zM5 0h4v4H5zM10 0h4v4h-4zM0 5h4v4H0zM5 5h4v4H5zM10 5h4v4h-4zM0 10h4v4H0zM5 10h4v4H5zM10 10h4v4h-4z" /></Icon></IconButton>
          </ButtonStrip>
        </Row>
        <SwatchBox>
          <SwatchGrid>
            {swatchRows.map((s, i) => (
              <SwatchCell key={i} $bg={swatchBg(s)} aria-label={`スウォッチ ${i + 1}`}>
                {s === "none" && <Icon w={13} h={13}><rect x="1.500" y="1.500" width="10" height="10" fill="#fff" stroke="#000" /><path d="M3 10l7-7" stroke="#f00" strokeWidth="2" /><path stroke="#fff" d="M.5.5h12v12H.5z" /></Icon>}
                {s === "target" && <Target />}
              </SwatchCell>
            ))}
          </SwatchGrid>
          <ScrollEnds><ChevronUp /><Chevron /></ScrollEnds>
        </SwatchBox>
        <Footer $pl={5}>
          <Icon w={14} h={12}><path className="f" d="M0 1h3v10H0zM4 1h2v10H4zM7 2l2-1 3 9-2 1zM12 10h3l-1.500 2z" /></Icon>
          <Icon w={14} h={13}><path d="M2.500 5V1.500h10v9H9M5 12.500h2M4.500 3.500h6v5h-4" /><path className="f" d="M0 8h4V6l4 3-4 3V10H0zM8 1h3v4L9.500 4 8 5z" /></Icon>
          <Push />
          <Icon w={15} h={12}><path d="M.5.5h10v10H.5z" /><path className="f" d="M2 2h2v2H2zM5 2h2v2H5zM8 2h2v2H8zM2 5h2v2H2zM8 5h2v2H8zM5 8h2v2H5zM2 8h2v2H2zM5 5h2v2H5zM12 10h3l-1.500 2z" /></Icon>
          <Faded><Icon w={11} h={11}><path d="M.5.5h10v10H.5zM2 3h1M4 3h5M2 5.500h1M4 5.500h5M2 8h1M4 8h5" /></Icon></Faded>
          <Icon w={14} h={11}><path className="f" d="M0 0h6l1 2h7v9H0z" /></Icon>
          <Faded><PlusBox /></Faded>
          <Faded><Bin /></Faded>
        </Footer>
      </Body>
    </>
  );
}

/* ---------- stroke ---------- */

const StrokeRow = styled.div`
  display: flex;
  align-items: center;
  height: 22px;
  margin-bottom: ${(p) => p.$mb ?? 6}px;
  color: ${(p) => (p.$lit ? "#d8d8d8" : color.dim)};
  > span:first-child {
    width: 85px;
    padding-right: 1px;
    text-align: right;
    white-space: nowrap;
  }
`;

const DashGrid = styled.div`
  display: flex;
  gap: 14px;
  padding: 5px 0 0 6px;
  color: ${color.dim};
  label {
    display: flex;
    flex-direction: column;
    align-items: center;
    gap: 3px;
  }
`;

const Check = styled.input`
  width: 12px;
  height: 12px;
  border-radius: 2px;
  background: linear-gradient(#444, #444) center / 6px 2px no-repeat #d0d0d0;
`;

const DimText = styled.span`
  color: ${color.dim};
`;

const Pair = styled.div`
  display: flex;
  gap: 6px;
  > * { margin-right: 0; }
`;

const RowIcons = styled.div`
  display: flex;
  gap: 11px;
  margin-right: ${(p) => p.$mr}px;
`;

const capIcons = [
  <><path className="f" d="M4 1h7v4H6.500v3H11v4H4V9a2.500 2.500 0 0 1 0-5z" /><path d="M1 6.500h10" /></>,
  <><path className="f" d="M12 0v4H7v5h5v4H7A6.500 6.500 0 0 1 7 0z" /><path d="M6 6.500h6" /></>,
  <><path className="f" d="M0 0h12v4H5v5h7v4H0z" /><path d="M5 6.500h7" /></>,
];
const joinIcons = [
  <><path className="f" d="M0 0h12v4H4v8H0z" /><path className="f" d="M5 5h7v4H9v3H5z" /></>,
  <><path className="f" d="M7 0h5v4H7q-3 0-3 3v5H0V7Q0 0 7 0z" /><path className="f" d="M5 5h7v4H9v3H5z" /></>,
  <><path className="f" d="M5 0h7v4H6L4 6v6H0V5z" /><path className="f" d="M5 5h7v4H9v3H5z" /></>,
];
const alignIcons = [
  <><path className="f" d="M0 0h3v9h9v3H0zM4 0h3v5h5v3H4z" /></>,
  <><path className="f" d="M4 0h4v5h4v3H4z" /><path d="M1.500 0v8.500H12M1 11.500h11" /><circle cx="2" cy="10" r="2" /></>,
  <><path className="f" d="M0 0h5v7h7v5H0zM7 2h2v2h3v2H7z" /></>,
];

function Choice({ label, icons }) {
  return (
    <ButtonStrip>
      {icons.map((d, i) => (
        <IconButton key={i} $w={22} $h={20} $dim aria-label={`${label} ${i + 1}`}>
          <Icon w={12} h={13}>{d}</Icon>
        </IconButton>
      ))}
    </ButtonStrip>
  );
}

const GripBar = styled.div`
  display: flex;
  align-items: center;
  justify-content: center;
  height: 8px;
  border-top: 2px solid ${color.line};
`;

function StrokePanel() {
  return (
    <>
      <Tabs items={["線", "OpenType"]} active="線" marked />
      <Body $p="6px 5px 6px">
        <StrokeRow $lit><span>線幅：</span><Spinner label="線幅" w={95} h={23} /></StrokeRow>
        <StrokeRow><span>線端：</span><Choice label="線端" icons={capIcons} /></StrokeRow>
        <StrokeRow>
          <span>角の形状：</span><Choice label="角の形状" icons={joinIcons} />
          <Push /><DimText>比率：</DimText><Row $gap={2}><TextBox $dim $w={44} aria-label="比率" disabled /><span /></Row>
        </StrokeRow>
        <StrokeRow $mb={5}><span>線の位置：</span><Choice label="線の位置" icons={alignIcons} /></StrokeRow>
        <Rule />
        <Row $justify="space-between" $mt={4}>
          <Row as="label" $gap={5}><Check type="checkbox" defaultChecked /><b>破線</b></Row>
          <ButtonStrip>
            <IconButton $w={37} $h={20} $dim aria-label="長さを保持"><Icon w={28} h={12} sw={2}><path d="M1 5V1h6M11 1h6M21 1h3M27 1v5M1 8v3h4M9 11h6M19 11h6v-4" /></Icon></IconButton>
            <IconButton $w={37} $h={20} $dim aria-label="コーナーに整列"><Icon w={28} h={12} sw={2}><path d="M1 5V1h5M11 1h6M22 1h5v4M1 8v3h5M11 11h6M22 11h5V8" /></Icon></IconButton>
          </ButtonStrip>
        </Row>
        <DashGrid>
          {["線分", "間隔", "線分", "間隔", "線分", "間隔"].map((t, i) => (
            <label key={i}><TextBox $dim $w={37} defaultValue="0 pt" disabled />{t}</label>
          ))}
        </DashGrid>
        <Rule $mt={7} />
        <Row $mt={5} />
        <StrokeRow $mb={8}>
          <span>矢印：</span>
          <Pair>
            <Swatch $dim $w={62}><Preview $bg="#838383" /><button aria-label="始点"><Chevron /></button></Swatch>
            <Swatch $dim $w={62}><Preview $bg="#838383" /><button aria-label="終点"><Chevron /></button></Swatch>
          </Pair>
          <Push />
          <RowIcons $mr={5}><Icon w={13} h={12}><path className="f" d="M2 3h6V0l5 4-5 4V5H2zM11 8H5V5L0 9l5 3v-2h6z" /></Icon></RowIcons>
        </StrokeRow>
        <StrokeRow $mb={8}>
          <span>倍率：</span>
          <Pair>
            <Spinner label="始点倍率" value="100%" w={62} h={22} drop={false} dim />
            <Spinner label="終点倍率" value="100%" w={62} h={22} drop={false} dim />
          </Pair>
          <Push />
          <RowIcons $mr={5}><Icon w={15} h={17} sw={1.6}><path d="M5 6V4a3 3 0 0 1 6 0v3M5 10v3a3 3 0 0 0 6 0v-3M8 6v5M1 1l13 15" /></Icon></RowIcons>
        </StrokeRow>
        <StrokeRow $mb={2}>
          <span>先端位置：</span>
          <ButtonStrip>
            <IconButton $w={22} $h={20} $dim aria-label="パスの終点から"><Icon w={12} h={10}><path d="M0 1.500h5M0 6.500h8M5.500 0v4" /><path className="f" d="M6 3.500l6 3-6 3z" /></Icon></IconButton>
            <IconButton $w={22} $h={20} $dim aria-label="パスの終点に"><Icon w={12} h={10}><path d="M0 1.500h12M0 6.500h8M11.500 0v4" /><path className="f" d="M6 3.500l6 3-6 3z" /></Icon></IconButton>
          </ButtonStrip>
        </StrokeRow>
        <Rule />
        <Row $mt={5} />
        <StrokeRow $mb={0}>
          <span>プロファイル：</span>
          <Swatch $dim $w={106}><Preview $bg="#838383" /><button aria-label="プロファイル"><Chevron /></button></Swatch>
          <Push />
          <RowIcons $mr={6}>
            <Icon w={14} h={12}><path d="M1 2v8l4-4z" /><path className="f" d="M13.500 1v10L8 6z" /><path className="d" d="M7 0v12" /></Icon>
            <Icon w={12} h={14}><path className="f" d="M1 0h10L6 5z" /><path d="M2 13h8L6 9z" /><path className="d" d="M0 7h12" /></Icon>
          </RowIcons>
        </StrokeRow>
      </Body>
      <GripBar><Grip /></GripBar>
    </>
  );
}

/* ---------- layers ---------- */

const SearchRow = styled.div`
  display: flex;
  align-items: center;
  justify-content: space-between;
  height: 35px;
  padding: 0 5px 4px;
  border: 1px solid #4c4c4c;
  color: ${color.icon};
`;

const SearchField = styled.label`
  ${box}
  display: flex;
  align-items: center;
  gap: 10px;
  width: 282px;
  height: 24px;
  padding-left: 5px;
  svg { color: ${color.icon}; }
  input { flex: 1; }
  input::placeholder { color: #666666; opacity: 1; }
`;

const LayerList = styled.ul`
  height: 207px;
  border: 1px solid #646464;
`;

const LayerRow = styled.li`
  display: grid;
  grid-template-columns: 21px 21px 6px 24px 1fr 36px;
  height: 21px;
  border-bottom: 1px solid #616161;
  background: ${(p) => (p.$on ? "#50677e" : "transparent")};
  > * { border-right: 1px solid #616161; }
  > *:nth-child(4), > *:last-child { border-right: 0; }
`;

const LayerBar = styled.div`
  background: linear-gradient(${(p) => p.$c}, ${(p) => p.$c}) 1px center / 3px 18px no-repeat;
`;

const LayerName = styled.div`
  display: flex;
  align-items: center;
  gap: 5px;
`;

const Thumbnail = styled.div`
  width: 18px;
  height: 18px;
  border: 1px solid #000000;
  background: #ffffff;
`;

const TargetCell = styled.div`
  display: flex;
  justify-content: space-between;
  padding-left: 6px;
  color: ${color.icon};
`;

const LayerCount = styled.span`
  color: ${color.label};
  white-space: nowrap;
`;

const Eye = () => <Icon w={13} h={9} sw={1.5}><path d="M.7 4.500C3 1 10 1 12.300 4.500 10 8 3 8 .7 4.500z" /><circle className="f" cx="6.500" cy="4.300" r="2" /></Icon>;
const Lock = () => <Icon w={9} h={11} sw={1.5}><path d="M2 5V3a2.500 2.500 0 0 1 5 0v2" /><path className="f" d="M.5 5h8v6h-8z" /><path stroke="#535353" d="M4.500 7v2.500" /></Icon>;

const layers = [
  { name: "guide", bar: "#ff5050", lock: true },
  { name: "レイヤー 1", bar: "#5080ff", on: true },
];

function LayersPanel() {
  return (
    <>
      <Tabs first items={["レイヤー", "アートボード", "リンク", "ナビゲーター"]} active="レイヤー" />
      <Body $p="7px 5px 1px">
        <SearchRow>
          <SearchField>
            <Magnifier />
            <input type="text" placeholder="すべてを検索" aria-label="すべてを検索" />
          </SearchField>
          <Icon w={14} h={14}><path className="f" d="M0 0h14L8.500 6.500V13l-3 1V6.500z" /></Icon>
        </SearchRow>
        <LayerList>
          {layers.map((l) => (
            <LayerRow key={l.name} $on={l.on}>
              <IconButton $w={21} $h={18} aria-label={`${l.name} 表示`}><Eye /></IconButton>
              <IconButton $w={21} $h={20} aria-label={`${l.name} ロック`}>{l.lock && <Lock />}</IconButton>
              <LayerBar $c={l.bar} />
              <IconButton $w={18} $h={20} aria-label={`${l.name} 展開`}>{l.lock && <ChevronRight />}</IconButton>
              <LayerName><Thumbnail />{l.name}</LayerName>
              <TargetCell>
                <Row><Icon w={9} h={9}><circle cx="4.500" cy="4.500" r="3.600" strokeWidth="1.300" /></Icon></Row>
                {l.on && <Icon w={6} h={6}><path className="f" d="M0 0h6v6z" /></Icon>}
              </TargetCell>
            </LayerRow>
          ))}
        </LayerList>
        <Footer>
          <LayerCount>2 レイヤー</LayerCount>
          <Push />
          <Icon w={13} h={12}><path d="M2.500 2.500h8v7h-8zM0 2.500h3M2.500 0v3M10.500 0v3M10 2.500h3M0 9.500h3M2.500 9v3" /><path className="f" d="M8 6h5v6l-2.500-2L8 12z" /></Icon>
          <Faded><Icon w={12} h={12}><path d="M5 2.500H.5v9h9V7M5 7l6-6M7 .5h4.500V5" /></Icon></Faded>
          <Faded><Magnifier /></Faded>
          <Faded><Icon w={11} h={11}><path d="M.5.5h7v7h-7z" /><path d="M3.500 3.500h7v7h-7z" /><path className="f" d="M4 4h4v4H4z" /></Icon></Faded>
          <Icon w={15} h={12}><path d="M6.500 2.500h8v8h-8zM10.500 4.500v4M8.500 6.500h4M.5 0v3.500H4" /><path className="f" d="M3 1l3 2.500L3 6z" /></Icon>
          <PlusBox />
          <Bin />
        </Footer>
      </Body>
    </>
  );
}

/* ---------- character ---------- */

const IconSlot = styled.span`
  display: flex;
  justify-content: center;
  width: 18px;
  color: ${color.icon};
`;

const Glyph = ({ x, y, s = 12, f = serif, w, cut, children }) => (
  <text className={cut ? "k" : undefined} x={x} y={y} fontSize={s} fontFamily={f} fontWeight={w} textAnchor="middle">{children}</text>
);

const charIcons = {
  size: <><Glyph x={4} y={15} s={10}>T</Glyph><Glyph x={12} y={15} s={18} w="bold" f={boldSerif}>T</Glyph></>,
  leading: <><Glyph x={12} y={8} s={10} f={arial}>A</Glyph><Glyph x={12} y={17} s={10} f={arial}>A</Glyph><path d="M6 8.500h12M6 17.500h12M2.500 9v7M.5 10.500l2-2 2 2M.5 14.500l2 2 2-2" /></>,
  height: <><Glyph x={12} y={15} s={18} w="bold" f={boldSerif}>T</Glyph><path d="M2.500 3v12M.5 5l2-2 2 2M.5 13l2 2 2-2" /></>,
  width: <><Glyph x={9} y={12} s={16} w="bold" f={boldSerif}>T</Glyph><path d="M1 15.500h16M3 13l-2 2.500L3 18M15 13l2 2.500-2 2.500" /></>,
  kern: <><Glyph x={9} y={11} s={12} f={arial}>V/A</Glyph><path d="M10 15.500h7M12 13l-2 2.500 2 2.500" /></>,
  track: <><path className="f" d="M0 0h18v12H0z" /><Glyph cut x={9} y={11} s={12} f={arial}>VA</Glyph><path d="M1 15.500h16M3 13l-2 2.500L3 18M15 13l2 2.500-2 2.500" /></>,
  tsume: <><Glyph x={9} y={10} s={10} f={jp}>あ</Glyph><path className="d" d="M2.500 1v9M15.500 1v9" /><path d="M1 14.500h5M4 12.500l2 2-2 2M17 14.500h-5M14 12.500l-2 2 2 2" /></>,
  before: <><Glyph x={9} y={10} s={10} f={jp}>あ</Glyph><path className="d" d="M2.500 1v9M15.500 1v9" /><path d="M1 14.500h5M4 12.500l2 2-2 2" /></>,
  after: <><Glyph x={9} y={10} s={10} f={jp}>あ</Glyph><path className="d" d="M2.500 1v9M15.500 1v9" /><path d="M15 14.500h-5M12 12.500l-2 2 2 2" /></>,
  shift: <><Glyph x={6} y={13} s={14} f={sans}>A</Glyph><Glyph x={14} y={7} s={9} f={sans}>a</Glyph><path d="M1 14.500h10M11 8.500h6M14 16v-6M12 12l2-2 2 2" /></>,
  turn: <><circle cx="9" cy="10" r="7" strokeWidth="1.300" /><Glyph x={9} y={14} s={11}>T</Glyph><path d="M9 0l3 3-3 3" /></>,
};

function Metric({ icon, label, value, select }) {
  return (
    <Row $gap={3}>
      <IconSlot><Icon w={18} h={18}>{charIcons[icon]}</Icon></IconSlot>
      {select ? <Select label={label} value={value} w={90} /> : <Spinner label={label} value={value} />}
    </Row>
  );
}

const MetricRow = ({ left, right }) => (
  <Row $justify="space-between" $mt={5}>
    <Metric {...left} />
    {right && <Metric {...right} />}
  </Row>
);

const StyleText = styled.button`
  width: 26px;
  height: 22px;
  color: ${color.icon};
  font: 14px "DejaVu Serif", serif;
  text-decoration: ${(p) => p.$deco || "none"};
  small { font-size: 10px; }
  sup, sub { font-size: 8px; line-height: 8px; }
  sup { align-self: flex-start; margin-top: 5px; }
  sub { align-self: flex-end; margin-bottom: 2px; }
`;

const Section = styled.div`
  color: ${color.label};
  white-space: nowrap;
`;

const FontField = styled.div`
  ${box}
  display: flex;
  align-items: center;
  width: 238px;
  height: 21px;
  margin-bottom: 5px;
  svg { color: ${color.icon}; }
  input { flex: 1; padding-left: 6px; font-weight: 500; }
  > button { width: 18px; height: 100%; border-left: 1px solid ${color.edge}; svg { color: #ffffff; } }
`;

const SnapGrid = styled.div`
  display: grid;
  grid-template-columns: 43px 58px 57px 56px 34px 44px 1fr;
  margin-top: 9px;
`;

function CharacterPanel() {
  return (
    <>
      <Tabs items={["文字", "段落", "情報"]} active="文字" marked />
      <Body $p="6px 5px 7px">
        <FontField>
          <Icon w={20} h={13} sw={1.5}><circle cx="6" cy="5" r="3.800" /><path strokeWidth="2" d="M9 8l3 4" /><path d="M12.500 5l3 3 3-3" /></Icon>
          <input aria-label="フォント" defaultValue="小塚ゴシック Pr6N" />
          <button aria-label="フォント一覧"><Chevron /></button>
        </FontField>
        <Field $pad={6}><input aria-label="スタイル" defaultValue="R" /><button aria-label="スタイル一覧"><Chevron /></button></Field>
        <Rule />
        <MetricRow left={{ icon: "size", label: "サイズ", value: "12 pt" }} right={{ icon: "leading", label: "行送り", value: "(21 pt)" }} />
        <MetricRow left={{ icon: "height", label: "垂直比率", value: "100%" }} right={{ icon: "width", label: "水平比率", value: "100%" }} />
        <MetricRow left={{ icon: "kern", label: "カーニング", value: "0" }} right={{ icon: "track", label: "トラッキング", value: "0" }} />
        <Rule />
        <MetricRow left={{ icon: "tsume", label: "ツメ", value: "0%" }} />
        <MetricRow left={{ icon: "before", label: "前アキ", value: "自動", select: true }} right={{ icon: "after", label: "後アキ", value: "自動", select: true }} />
        <Rule />
        <MetricRow left={{ icon: "shift", label: "ベースライン", value: "0 pt" }} right={{ icon: "turn", label: "文字回転", value: "0º" }} />
        <Rule />
        <Row $justify="space-between" $mt={1}>
          <Row $gap={4}><StyleText>TT</StyleText><StyleText>T<small>T</small></StyleText></Row>
          <Row $gap={2}><StyleText>T<sup>1</sup></StyleText><StyleText>T<sub>1</sub></StyleText></Row>
          <Row $gap={4}><StyleText $deco="underline">T</StyleText><StyleText $deco="line-through">T</StyleText></Row>
        </Row>
        <Rule $mt={1} />
        <Row $justify="space-between" $mt={5}>
          <Select label="言語" value="英語：米国" w={105} />
          <Row $gap={6}>
            <Icon w={16} h={14}><Glyph x={4} y={8} s={11} f={sans}>a</Glyph><Glyph x={12} y={12} s={12} f={sans}>a</Glyph></Icon>
            <Select label="アンチエイリアス" value="シャープ" w={105} />
          </Row>
        </Row>
        <Rule />
        <Row $justify="space-between" $mt={4} $h={26}>
          <Section>グリフにスナップ</Section>
          <Row $gap={11}>
            <IconButton $w={24} aria-label="グリフ"><Icon w={17} h={15}><path d="M.5.500h9v12h-9z" /><Glyph x={5} y={11} s={12} f={sans}>A</Glyph><Glyph x={13} y={12} s={11} f={sans}>g</Glyph></Icon></IconButton>
            <IconButton $w={24} aria-label="情報"><Icon w={15} h={15} sw={1.3}><circle cx="7.500" cy="7.500" r="6.500" /><path className="f" d="M6.500 3h2v2h-2zM5.500 6h3v4.500h1v1h-4v-1h1V7h-1z" /></Icon></IconButton>
          </Row>
        </Row>
        <SnapGrid>
          <IconButton $w={25} $h={25} $dim aria-label="仮想ボディ"><Icon w={15} h={15}><path d="M.5.500h14v14H.5z" /><Glyph x={7.5} y={12} s={12} f={jp}>あ</Glyph></Icon></IconButton>
          <IconButton $w={25} $h={25} $dim aria-label="中央"><Icon w={17} h={15}><path d="M1.500.500h14v14h-14zM0 7.500h17" /><Glyph x={8.5} y={12} s={12} f={jp}>あ</Glyph></Icon></IconButton>
          <IconButton $w={25} $h={25} $tile aria-label="境界"><Icon w={18} h={18}><g opacity=".7"><path d="M.5.500h17v17H.5zM0 12.500h18" /><Glyph x={9} y={13} s={13} f={sans}>Ag</Glyph></g></Icon></IconButton>
          <IconButton $w={25} $h={25} $tile aria-label="エックスハイト"><Icon w={18} h={18}><g opacity=".7"><path d="M0 15.500h18" /><Glyph x={9} y={14} s={13} f={sans}>Ax</Glyph></g></Icon></IconButton>
          <Divider $c={color.rule} $h={25} />
          <IconButton $w={25} $h={25} $tile aria-label="角度"><Icon w={16} h={18}><g opacity=".7"><Glyph x={7} y={14} s={14} f={sans}>A</Glyph><path d="M9 2l5 13" /></g></Icon></IconButton>
          <IconButton $w={25} $h={25} $tile aria-label="アンカー"><Icon w={16} h={18}><g opacity=".7"><Glyph x={7} y={14} s={12} f={sans}>A</Glyph><path d="M8.500 1.500h3v3h-3z" /></g></Icon></IconButton>
        </SnapGrid>
      </Body>
    </>
  );
}

/* ---------- align ---------- */

const alignSets = [
  [["左", "M1 0h1v18H1zM3 3h8v5H3zM3 11h13v5H3z"], ["中央", "M8 0h1v18H8zM4 3h9v5H4zM2 11h13v5H2z"], ["右", "M16 0h1v18h-1zM7 3h8v5H7zM2 11h13v5H2z"]],
  [["上", "M0 1h18v1H0zM3 3h5v13H3zM10 3h6v8h-6z"], ["中", "M0 9h18v1H0zM3 3h5v13H3zM10 5h6v9h-6z"], ["下", "M0 16h18v1H0zM3 2h5v13H3zM10 7h6v8h-6z"]],
  [["上端分布", "M0 1h18v1H0zM5 3h8v4H5zM0 10h18v1H0zM3 12h12v5H3z"], ["垂直中央分布", "M0 4h18v1H0zM5 2h8v5H5zM0 13h18v1H0zM3 11h12v5H3z"], ["下端分布", "M5 1h8v4H5zM0 6h18v1H0zM3 10h12v5H3zM0 16h18v1H0z"]],
  [["左端分布", "M1 0h1v18H1zM3 3h5v12H3zM11 0h1v18h-1zM13 5h4v8h-4z"], ["水平中央分布", "M4 0h1v18H4zM2 3h5v12H2zM13 0h1v18h-1zM11 5h5v8h-5z"], ["右端分布", "M1 3h5v12H1zM7 0h1v18H7zM11 5h4v8h-4zM16 0h1v18h-1z"]],
];

const AlignGroup = ({ set }) => (
  <Row $gap={12}>
    {set.map(([n, d]) => (
      <IconButton key={n} $w={24} $h={20} aria-label={n}>
        <Icon w={18} h={18}><path className="f" d={d} /></Icon>
      </IconButton>
    ))}
  </Row>
);

const Split = styled.div`
  display: grid;
  grid-template-columns: 1fr 2px 139px;
  margin-top: 7px;
  padding-bottom: 5px;
`;

const RightHalf = styled.div`
  padding-left: 51px;
`;

function AlignPanel() {
  return (
    <>
      <Tabs items={["パスファインダー", "整列", "変形"]} active="整列" marked />
      <Body $p="9px 5px 0">
        <Section>オブジェクトの整列：</Section>
        <Row $justify="space-between" $mt={10} $h={20}><AlignGroup set={alignSets[0]} /><AlignGroup set={alignSets[1]} /></Row>
        <Rule $mt={9} />
        <Row $mt={7} />
        <Section>オブジェクトの分布：</Section>
        <Row $justify="space-between" $mt={10} $h={20}><AlignGroup set={alignSets[2]} /><AlignGroup set={alignSets[3]} /></Row>
        <Rule $mt={9} />
        <Split>
          <div>
            <Section>等間隔に分布：</Section>
            <Row $gap={8} $mt={8} $h={24}>
              <IconButton $w={24} aria-label="垂直方向等間隔"><Icon w={18} h={16}><path className="f" d="M7 1h8v5H7zM5 10h13v5H5z" /><path d="M2.500 4v9M0 6.500h5M0 10.500h5" /></Icon></IconButton>
              <IconButton $w={24} aria-label="水平方向等間隔"><Icon w={16} h={18}><path className="f" d="M1 6h5v11H1zM9 6h6v9H9z" /><path d="M3 2.500h9M5.500 0v5M9.500 0v5" /></Icon></IconButton>
              <Spinner label="間隔" value="0 mm" w={62} h={21} drop={false} dim />
            </Row>
          </div>
          <Divider $c={color.rule} $h={52} />
          <RightHalf>
            <Section>整列：</Section>
            <Row $gap={7} $mt={8} $h={24}>
              <IconButton $w={24} aria-label="アートボードに整列"><Icon w={14} h={14}><path d="M3.500 3.500h7l2 2v7h-9zM0 3.500h2M3.500 0v2" /></Icon></IconButton>
              <IconButton $w={24} $h={24} $on aria-label="選択範囲に整列"><Icon w={14} h={14}><g stroke="#fff"><path className="d" d="M1.500 1.500h11v11h-11z" /><path fill="#fff" stroke="none" d="M0 0h3v3H0zM6 0h2v3H6zM11 0h3v3h-3zM0 6h3v2H0zM6 6h2v2H6zM11 6h3v2h-3zM0 11h3v3H0zM6 11h2v3H6zM11 11h3v3h-3z" /></g></Icon></IconButton>
              <IconButton $w={24} $h={24} aria-label="キーオブジェクトに整列"><Icon w={14} h={14}><path className="d" d="M1.500 1.500h11v11h-11z" /><path className="f" d="M0 0h3v3H0zM6 0h2v2H6zM11 0h3v3h-3zM0 11h3v3H0zM6 12h2v2H6zM11 11h3v3h-3z" /><path strokeWidth="2" d="M4 4l4 4" /><circle cx="9" cy="9" r="2" strokeWidth="1.500" /></Icon></IconButton>
            </Row>
          </RightHalf>
        </Split>
      </Body>
    </>
  );
}

/* ---------- page ---------- */

const Page = styled.div`
  position: relative;
  display: flex;
  flex-direction: column;
  min-height: 100vh;
  overflow: hidden;
`;

const AppWindow = styled.div`
  flex: 1;
  display: flex;
  flex-direction: column;
  padding-bottom: 3px;
  border: 1px solid ${color.line};
  border-width: 0 1px 1px;
  border-radius: 4px 4px 0 0;
  background: ${color.panel};
`;

const Inner = styled.div`
  flex: 1;
  display: flex;
  flex-direction: column;
  margin-left: 3px;
  border-left: 1px solid ${color.line};
`;

const Desktop = styled.div`
  height: 8px;
  background: linear-gradient(90deg, #3a2a45, #4f3a5f 12%, #6b4f78 22%, #2a1a18 25%, #2c1c1a 37%, #33284a 48%, #1f2a6a 62%, #1f2860);
`;

export default function App() {
  return (
    <Page>
      <GlobalStyle />
      <AppWindow>
        <AppMenu />
        <Inner>
          <Controls />
          <DocTabs>
            <DocTab>
              <span>guideai* @ 66.67 % (CMYK/CPU プレビュー)</span>
              <button aria-label="閉じる"><Close /></button>
            </DocTab>
          </DocTabs>
          <Workspace>
            <RulerSvg aria-hidden="true"><path d="M0 4.500H16M4.500 0V16" /></RulerSvg>
            <HorizontalRuler />
            <VerticalRuler />
            <Canvas>
              <Bleed>
                <Artboard>
                  <Guide><Icon w={5} h={5} sw={1.2}><path d="M0 0l5 5M5 0L0 5" /></Icon></Guide>
                </Artboard>
              </Bleed>
            </Canvas>
            <VScroll><ChevronUp /><Thumb $w={15} $h={25} /><Chevron /></VScroll>
          </Workspace>
          <StatusLine />
        </Inner>
      </AppWindow>
      <Desktop />
      <Tools />
      <Docks>
        <Float $w={317}>
          <FloatTitle><Collapse /><Close /></FloatTitle>
          <ColorPanel />
          <SwatchPanel />
          <StrokePanel />
        </Float>
        <Float $w={329}>
          <FloatTitle><Collapse /><Close /></FloatTitle>
          <LayersPanel />
          <CharacterPanel />
          <AlignPanel />
        </Float>
      </Docks>
    </Page>
  );
}
